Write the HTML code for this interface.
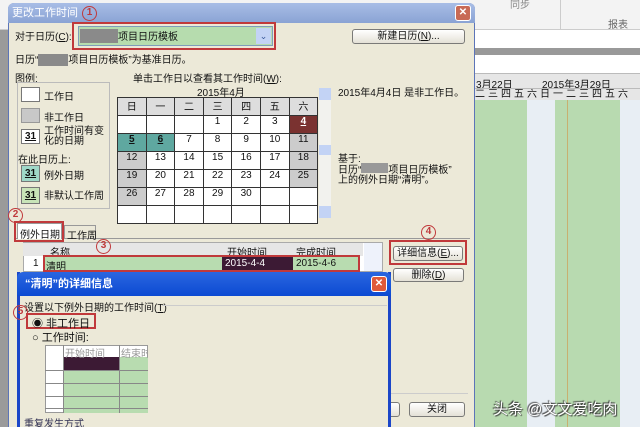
<!DOCTYPE html><html style="width:640px;height:427px;overflow:hidden"><head><meta charset="utf-8"><style>
*{margin:0;padding:0;box-sizing:border-box}
body{width:640px;height:427px;overflow:hidden;position:relative;background:#fff;font-family:"Liberation Sans","Noto Sans CJK SC",sans-serif;font-size:10px;color:#111}
.a{position:absolute;white-space:nowrap}
.btn{position:absolute;background:linear-gradient(#fff,#e4e1d6);border:1px solid #7a7a78;border-radius:3px;text-align:center;font-size:10px;line-height:13px;white-space:nowrap}
.rb{position:absolute;border:2px solid #c0393b}
.circ{position:absolute;width:15px;height:15px;border:1.5px solid #c0393b;border-radius:50%;color:#c0393b;font-size:10px;line-height:12px;text-align:center;font-weight:bold}
table{border-collapse:collapse}
.cal td{border:1px solid #333;width:28.6px;height:18px;text-align:center;vertical-align:top;font-size:10px;background:#fff}
</style></head><body>
<div class="a" style="left:0;top:0;width:640px;height:30px;background:#f3f3f3;border-bottom:1px solid #ccc"></div>
<div class="a" style="left:560px;top:0;width:1px;height:30px;background:#ccc"></div>
<div class="a" style="left:510px;top:-4px;color:#888">同步</div>
<div class="a" style="left:608px;top:16px;color:#666">报表</div>
<div class="a" style="left:475px;top:48px;width:165px;height:7px;background:#999"></div>
<div class="a" style="left:475px;top:73px;width:165px;height:27px;background:#e6e6e6;border-top:1px solid #bbb"></div>
<div class="a" style="left:476px;top:76px;font-size:10px">3月22日</div>
<div class="a" style="left:542px;top:76px;font-size:10px">2015年3月29日</div>
<div class="a" style="left:475px;top:88px;width:165px;height:12px;font-size:10px;letter-spacing:3px;border-top:1px solid #bbb;line-height:12px;overflow:hidden">二三四五六日一二三四五六</div>
<div class="a" style="left:475px;top:100px;width:52px;height:327px;background:#b8dab0"></div>
<div class="a" style="left:527px;top:100px;width:28px;height:327px;background:#e8eef4"></div>
<div class="a" style="left:555px;top:100px;width:65px;height:327px;background:#b8dab0"></div>
<div class="a" style="left:567px;top:100px;width:1px;height:327px;background:#c8b070"></div>
<div class="a" style="left:620px;top:100px;width:20px;height:327px;background:#e8eef4"></div>
<div class="a" style="left:0;top:30px;width:8px;height:397px;background:#9a9a9a"></div>
<div class="a" style="left:8px;top:3px;width:467px;height:424px;background:#ece9d8;border:1px solid #5c74b8;border-bottom:none;border-radius:6px 6px 0 0"></div>
<div class="a" style="left:8px;top:3px;width:467px;height:20px;background:linear-gradient(#a8bde6,#8aa3d4);border-radius:6px 6px 0 0;color:#fff;font-size:11px;line-height:20px;padding-left:4px">更改工作时间</div>
<div class="a" style="left:455px;top:5px;width:16px;height:16px;background:#c86a55;border:1px solid #fff;border-radius:3px;color:#fff;text-align:center;line-height:14px;font-weight:bold">✕</div>
<div class="a" style="left:15px;top:28px">对于日历(<u>C</u>):</div>
<div class="a" style="left:78px;top:26px;width:195px;height:20px;background:#b6dcae;border:1px solid #7f9db9"></div>
<div class="a" style="left:80px;top:29px;width:38px;height:14px;background:#8a8a8a"></div>
<div class="a" style="left:118px;top:28px">项目日历模板</div>
<div class="a" style="left:256px;top:28px;width:15px;height:16px;background:#c3d3f5;color:#3a5a9a;text-align:center;line-height:16px;font-size:9px">⌄</div>
<div class="rb" style="left:72px;top:22px;width:204px;height:28px"></div>
<div class="circ" style="left:82px;top:6px">1</div>
<div class="btn" style="left:352px;top:29px;width:113px;height:15px">新建日历(<u>N</u>)...</div>
<div class="a" style="left:15px;top:51px">日历“<span style="display:inline-block;width:30px;height:12px;background:#8a8a8a;vertical-align:middle"></span>项目日历模板”为基准日历。</div>
<div class="a" style="left:15px;top:70px">图例:</div>
<div class="a" style="left:17px;top:82px;width:93px;height:127px;border:1px solid #bbb"></div>
<div class="a" style="left:21px;top:87px;width:19px;height:15px;background:#fff;border:1px solid #777"></div>
<div class="a" style="left:44px;top:88px">工作日</div>
<div class="a" style="left:21px;top:108px;width:19px;height:15px;background:#c8c8c8;border:1px solid #999"></div>
<div class="a" style="left:44px;top:109px">非工作日</div>
<div class="a" style="left:21px;top:129px;width:19px;height:15px;background:#fff;border:1px solid #777;font-weight:bold;text-align:center;text-decoration:underline;line-height:13px">31</div>
<div class="a" style="left:44px;top:127px;line-height:10px">工作时间有变<br>化的日期</div>
<div class="a" style="left:18px;top:151px">在此日历上:</div>
<div class="a" style="left:21px;top:165px;width:19px;height:17px;background:#9fd8c8;border:1px solid #777;font-weight:bold;text-align:center;text-decoration:underline;line-height:15px">31</div>
<div class="a" style="left:44px;top:167px">例外日期</div>
<div class="a" style="left:21px;top:187px;width:19px;height:17px;background:#c8e4b8;border:1px solid #777;font-weight:bold;text-align:center;text-decoration:underline;line-height:15px">31</div>
<div class="a" style="left:44px;top:187px">非默认工作周</div>
<div class="a" style="left:133px;top:70px">单击工作日以查看其工作时间(<u>W</u>):</div>
<div class="a" style="left:197px;top:84px">2015年4月</div>
<table class="cal a" style="left:117px;top:97px">
<tr><td style="height:14px;background:#ddd">日</td><td style="background:#ddd">一</td><td style="background:#ddd">二</td><td style="background:#ddd">三</td><td style="background:#ddd">四</td><td style="background:#ddd">五</td><td style="background:#ddd">六</td></tr>
<tr><td></td><td></td><td></td><td>1</td><td>2</td><td>3</td><td style="background:#7a3230;color:#fff;font-weight:bold;text-decoration:underline">4</td></tr>
<tr><td style="background:#5fa8a0;font-weight:bold;text-decoration:underline">5</td><td style="background:#5fa8a0;font-weight:bold;text-decoration:underline">6</td><td>7</td><td>8</td><td>9</td><td>10</td><td style="background:#ccc">11</td></tr>
<tr><td style="background:#ccc">12</td><td>13</td><td>14</td><td>15</td><td>16</td><td>17</td><td style="background:#ccc">18</td></tr>
<tr><td style="background:#ccc">19</td><td>20</td><td>21</td><td>22</td><td>23</td><td>24</td><td style="background:#ccc">25</td></tr>
<tr><td style="background:#ccc">26</td><td>27</td><td>28</td><td>29</td><td>30</td><td></td><td></td></tr>
<tr><td></td><td></td><td></td><td></td><td></td><td></td><td></td></tr>
</table>
<div class="a" style="left:319px;top:88px;width:12px;height:130px;background:#f2f2ee"></div>
<div class="a" style="left:319px;top:88px;width:12px;height:12px;background:#c3d3f5"></div>
<div class="a" style="left:319px;top:145px;width:12px;height:10px;background:#c3d3f5"></div>
<div class="a" style="left:319px;top:206px;width:12px;height:12px;background:#c3d3f5"></div>
<div class="a" style="left:338px;top:84px">2015年4月4日 是非工作日。</div>
<div class="a" style="left:338px;top:150px">基于:</div>
<div class="a" style="left:338px;top:163px;line-height:10px">日历“<span style="display:inline-block;width:27px;height:10px;background:#999"></span>项目日历模板”<br>上的例外日期“清明”。</div>
<div class="a" style="left:15px;top:238px;width:455px;height:1px;background:#999"></div>
<div class="a" style="left:17px;top:223px;width:45px;height:16px;background:#fff;border:1px solid #999;border-bottom:none;padding:2px 2px">例外日期</div>
<div class="a" style="left:64px;top:225px;width:32px;height:14px;border:1px solid #999;padding:1px 2px">工作周</div>
<div class="rb" style="left:14px;top:221px;width:50px;height:21px"></div>
<div class="circ" style="left:8px;top:208px">2</div>
<div class="a" style="left:23px;top:242px;width:360px;height:30px;background:#fff;border:1px solid #aaa"></div>
<div class="a" style="left:23px;top:243px;width:340px;height:13px;background:#e6e6e6"></div>
<div class="a" style="left:50px;top:244px">名称</div>
<div class="a" style="left:227px;top:244px">开始时间</div>
<div class="a" style="left:296px;top:244px">完成时间</div>
<div class="a" style="left:33px;top:258px">1</div>
<div class="a" style="left:44px;top:256px;width:316px;height:14px;background:#b8dcb0"></div>
<div class="a" style="left:46px;top:258px">清明</div>
<div class="a" style="left:222px;top:256px;width:71px;height:14px;background:#3c1a34;color:#fff;padding:2px 3px">2015-4-4</div>
<div class="a" style="left:296px;top:258px">2015-4-6</div>
<div class="a" style="left:364px;top:243px;width:18px;height:28px;background:#eef2fb"></div>
<div class="rb" style="left:43px;top:255px;width:317px;height:17px"></div>
<div class="circ" style="left:96px;top:239px">3</div>
<div class="rb" style="left:389px;top:240px;width:78px;height:25px"></div>
<div class="circ" style="left:421px;top:225px">4</div>
<div class="btn" style="left:393px;top:246px;width:70px;height:15px">详细信息(<u>E</u>)...</div>
<div class="btn" style="left:393px;top:268px;width:71px;height:14px">删除(<u>D</u>)</div>
<div class="a" style="left:383px;top:393px;width:85px;height:1px;background:#ccc"></div>
<div class="btn" style="left:383px;top:402px;width:17px;height:15px"></div>
<div class="btn" style="left:409px;top:402px;width:56px;height:15px">关闭</div>
<div class="a" style="left:17px;top:272px;width:374px;height:155px;background:#ece9d8;border:3px solid #1b46c8;border-top:none;border-bottom:none"></div>
<div class="a" style="left:17px;top:272px;width:374px;height:24px;background:linear-gradient(#2a66e0,#0c4ad2);border-radius:6px 6px 0 0;color:#fff;font-weight:bold;font-size:11px;line-height:24px;padding-left:8px">“清明”的详细信息</div>
<div class="a" style="left:371px;top:276px;width:16px;height:16px;background:#e05a3a;border:1px solid #fff;border-radius:3px;color:#fff;text-align:center;line-height:14px;font-weight:bold">✕</div>
<div class="a" style="left:24px;top:299px">设置以下例外日期的工作时间(<u>T</u>)</div>
<div class="a" style="left:162px;top:305px;width:225px;height:1px;background:#ccc"></div>
<div class="circ" style="left:13px;top:305px">5</div>
<div class="rb" style="left:26px;top:313px;width:70px;height:16px"></div>
<div class="a" style="left:32px;top:315px;font-size:11px">◉ 非工作日</div>
<div class="a" style="left:32px;top:329px;font-size:11px">○ 工作时间:</div>
<div class="a" style="left:45px;top:345px;width:103px;height:68px;background:#fff;border:1px solid #999"></div>
<div class="a" style="left:63px;top:357px;width:85px;height:56px;background:#b8dcb0"></div>
<div class="a" style="left:63px;top:357px;width:56px;height:13px;background:#3c1a34"></div>
<div class="a" style="left:65px;top:345px;color:#999">开始时间</div>
<div class="a" style="left:121px;top:345px;color:#999;width:27px;overflow:hidden">结束时</div>
<div class="a" style="left:119px;top:345px;width:1px;height:68px;background:#888"></div>
<div class="a" style="left:63px;top:345px;width:1px;height:68px;background:#888"></div>
<div class="a" style="left:45px;top:370px;width:103px;height:1px;background:#888"></div>
<div class="a" style="left:45px;top:383px;width:103px;height:1px;background:#888"></div>
<div class="a" style="left:45px;top:396px;width:103px;height:1px;background:#888"></div>
<div class="a" style="left:45px;top:408px;width:103px;height:1px;background:#888"></div>
<div class="a" style="left:24px;top:415px;color:#335">重复发生方式</div>
<div class="a" style="left:493px;top:398px;color:#fff;font-size:15px;text-shadow:1px 1px 1px #333,-1px -1px 1px #333">头条 @文文爱吃肉</div>
</body></html>
